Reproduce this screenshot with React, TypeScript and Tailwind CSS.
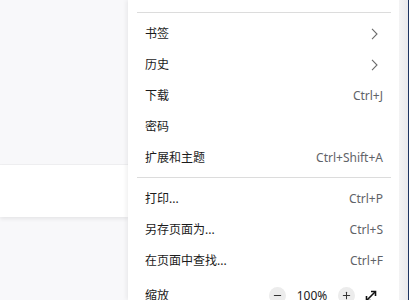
import { Minus, Plus } from 'lucide-react';

const cjk = { fontFamily: '"Noto Sans", "Noto Sans CJK SC", sans-serif' };

const Chevron = () => (
  <svg width="7" height="12" viewBox="0 0 7 12" fill="none" className="mr-[5px]">
    <polyline points="1,0.8 6,6 1,11.2" stroke="#6b6b6b" strokeWidth="1.1" />
  </svg>
);

const Separator = () => (
  <div className="shrink-0 pl-[9px] pr-[8px] py-[4px]">
    <div className="h-px bg-[#dcdcdc]" />
  </div>
);

type Item = { label: string; shortcut?: string; sub?: boolean };

const Row = ({ label, shortcut, sub }: Item) => (
  <div className="shrink-0 h-[31px] flex items-center justify-between pl-[17px] pr-[16px] text-[12px] text-[#1b1b1b]">
    <span>{label}</span>
    {sub ? <Chevron /> : shortcut ? <span className="text-[#5f6368]">{shortcut}</span> : null}
  </div>
);

const groupA: Item[] = [
  { label: '书签', sub: true },
  { label: '历史', sub: true },
  { label: '下载', shortcut: 'Ctrl+J' },
  { label: '密码' },
  { label: '扩展和主题', shortcut: 'Ctrl+Shift+A' },
];

const groupB: Item[] = [
  { label: '打印...', shortcut: 'Ctrl+P' },
  { label: '另存页面为...', shortcut: 'Ctrl+S' },
  { label: '在页面中查找...', shortcut: 'Ctrl+F' },
];

export default function App() {
  return (
    <div className="relative w-[409px] h-[300px] overflow-hidden bg-[#f8f8fa] flex" style={cjk}>
      {/* page behind the menu */}
      <div className="w-[128px] flex flex-col">
        <div className="shrink-0 h-[165px] border-b border-[#f0f0f2]" />
        <div className="shrink-0 h-[52px] bg-white shadow-[0_2px_4px_rgba(0,0,0,0.08)]" />
      </div>

      {/* menu */}
      <div className="w-[271px] h-full bg-white flex flex-col shadow-[-2px_0_4px_rgba(0,0,0,0.06)] z-10">
        <div className="shrink-0 h-[8px]" />
        <Separator />
        <div className="shrink-0 h-px" />
        {groupA.map((it) => (
          <Row key={it.label} {...it} />
        ))}
        <Separator />
        <div className="shrink-0 h-px" />
        {groupB.map((it) => (
          <Row key={it.label} {...it} />
        ))}
        <div className="shrink-0 h-[38px] flex items-center justify-between pl-[17px] pr-[22px] text-[12px] text-[#1b1b1b] pt-[1px]">
          <span>缩放</span>
          <div className="flex items-center">
            <span className="w-[17px] h-[17px] rounded-full bg-[#ececec] flex items-center justify-center">
              <Minus size={11} strokeWidth={2.2} color="#333" />
            </span>
            <span className="w-[52px] text-center">100%</span>
            <span className="w-[17px] h-[17px] rounded-full bg-[#ececec] flex items-center justify-center">
              <Plus size={11} strokeWidth={2.2} color="#333" />
            </span>
            <svg width="12" height="12" viewBox="0 0 12 12" className="ml-[10px]">
              <path d="M2 10 L10 2" stroke="#111" strokeWidth="1.6" />
              <path d="M6 1.5 H10.5 V6" stroke="#111" strokeWidth="1.6" fill="none" />
              <path d="M1.5 6 V10.5 H6" stroke="#111" strokeWidth="1.6" fill="none" />
            </svg>
          </div>
        </div>
      </div>

      {/* window edge */}
      <div className="w-[9px] h-full bg-gradient-to-r from-[#f4f4f5] to-[#e9e9ec]" />
      <div className="w-px h-full bg-[#1d3461]" />
    </div>
  );
}
